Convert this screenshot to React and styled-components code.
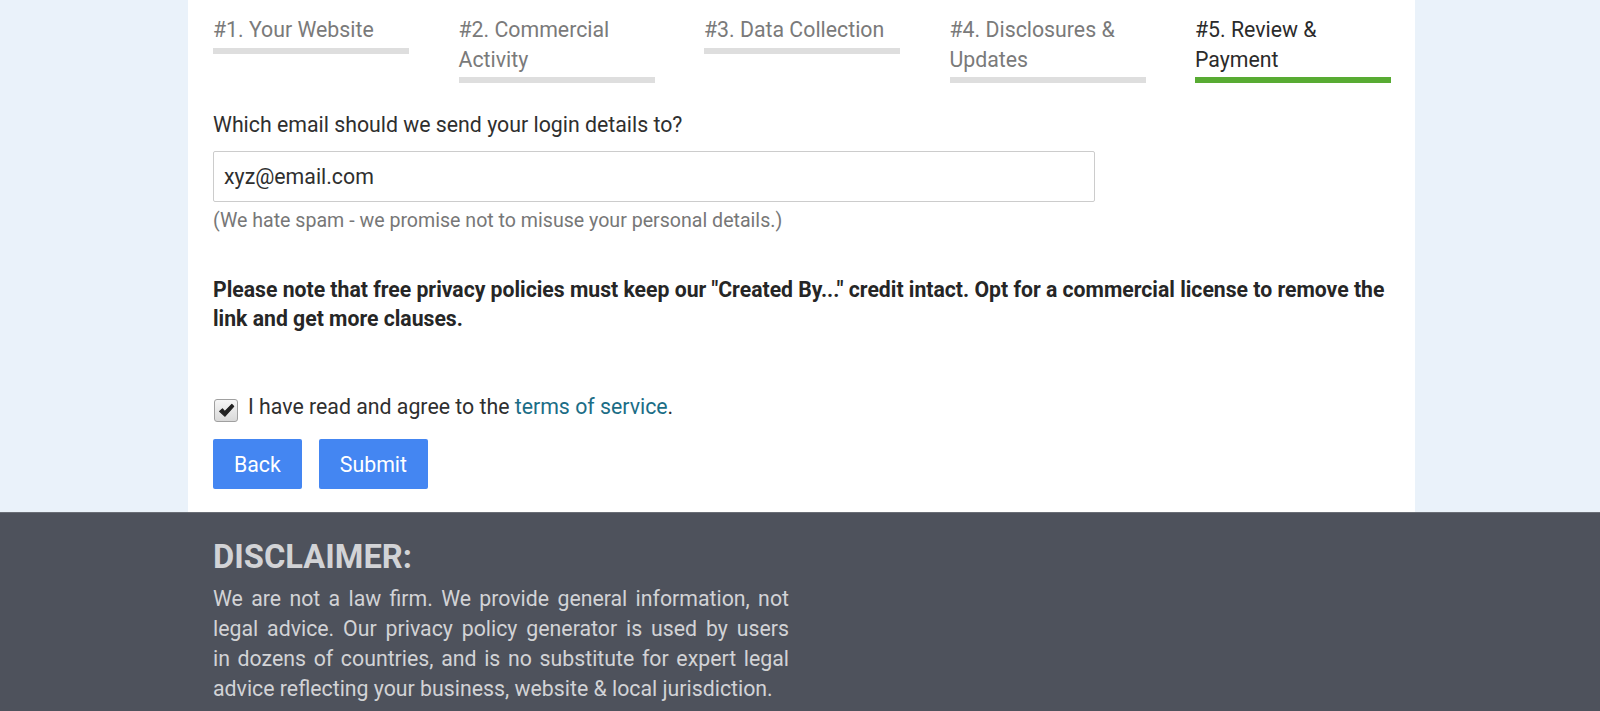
import React from 'react'
import { useState } from 'react'
import styled, { createGlobalStyle } from "styled-components";

const GlobalStyle = createGlobalStyle`
  html, body {
    margin: 0;
    padding: 0;
    background-color: #eaf2fa;
    font-family: Roboto, "Liberation Sans", Arial, sans-serif;
    color: #333;
  }
  * {
    box-sizing: border-box;
  }
`;

const steps = [
  { id: 1, title: "#1. Your Website" },
  { id: 2, title: "#2. Commercial Activity" },
  { id: 3, title: "#3. Data Collection" },
  { id: 4, title: "#4. Disclosures & Updates" },
  { id: 5, title: "#5. Review & Payment" },
];

const App = () => {
  const [email, setEmail] = useState("xyz@email.com");
  const [agreed, setAgreed] = useState(true);
  const current = 5;

  return (
    <>
      <GlobalStyle />
      <Page>
        <Panel>
          <Steps>
            {steps.map((step) => (
              <Step key={step.id} $active={step.id === current}>
                {step.title}
              </Step>
            ))}
          </Steps>

          <Field>
            <Label htmlFor="email">Which email should we send your login details to?</Label>
            <EmailInput
              id="email"
              type="email"
              value={email}
              onChange={(e) => setEmail(e.target.value)}
            />
            <Hint>(We hate spam - we promise not to misuse your personal details.)</Hint>
          </Field>

          <Note>
            Please note that free privacy policies must keep our "Created By..." credit intact.
            Opt for a commercial license to remove the link and get more clauses.
          </Note>

          <Agree>
            <CheckBox
              role="checkbox"
              aria-checked={agreed}
              onClick={() => setAgreed(!agreed)}
            >
              {agreed && (
                <svg width="17" height="15" viewBox="0 0 16 14">
                  <path
                    d="M1.5 7.8 L4.2 5.4 L6.4 8 L13 1.2 L14.8 3.2 L6.6 12.4 Z"
                    fill="#222"
                    stroke="#222"
                    strokeWidth="1"
                    strokeLinejoin="round"
                  />
                </svg>
              )}
            </CheckBox>
            <span>
              I have read and agree to the <Link href="#">terms of service</Link>.
            </span>
          </Agree>

          <Actions>
            <Button type="button">Back</Button>
            <Button type="submit">Submit</Button>
          </Actions>
        </Panel>

        <Footer>
          <FooterInner>
            <Disclaimer>
              <h2>DISCLAIMER:</h2>
              <p>
                We are not a law firm. We provide general information, not legal advice.
                Our privacy policy generator is used by users in&nbsp;dozens of countries, and
                is no substitute for expert legal advice reflecting your business, website
                &amp; local jurisdiction.
              </p>
            </Disclaimer>
          </FooterInner>
        </Footer>
      </Page>
    </>
  );
}

const Page = styled.div`
  display: flex;
  flex-direction: column;
  min-height: 100vh;
`;

const Panel = styled.main`
  width: 1227px;
  margin-left: 188px;
  background-color: #fff;
  padding: 15px 24px 23px 25px;
  display: flex;
  flex-direction: column;
`;

const Steps = styled.div`
  display: grid;
  grid-template-columns: repeat(5, 196px);
  column-gap: 49.5px;
  align-items: start;
`;

const Step = styled.div`
  font-size: 21.3px;
  line-height: 29.5px;
  color: ${(p) => (p.$active ? "#2b2b2b" : "#7a7a7a")};
  padding-bottom: 3px;
  border-bottom: 6px solid ${(p) => (p.$active ? "#58ab33" : "#dedede")};
`;

const Field = styled.div`
  display: flex;
  flex-direction: column;
  margin-top: 27px;
`;

const Label = styled.label`
  font-size: 21.3px;
  line-height: 30px;
  color: #2f2f2f;
`;

const EmailInput = styled.input`
  width: 882px;
  height: 51px;
  margin-top: 11px;
  padding: 0 10px;
  border: 1px solid #cccccc;
  border-radius: 2px;
  font-family: inherit;
  font-size: 21.3px;
  color: #2f2f2f;
  outline: none;
`;

const Hint = styled.div`
  margin-top: 6px;
  font-size: 19.6px;
  line-height: 26px;
  color: #777;
`;

const Note = styled.p`
  margin: 41px 0 0;
  font-size: 21.2px;
  line-height: 29px;
  font-weight: 700;
  color: #262626;
`;

const Agree = styled.label`
  display: flex;
  align-items: center;
  gap: 10px;
  margin-top: 59px;
  font-size: 21.3px;
  line-height: 30px;
  color: #2f2f2f;
`;

const CheckBox = styled.span`
  width: 24px;
  height: 23px;
  margin-top: 6px;
  margin-left: 1px;
  border: 1px solid #a0a0a0;
  border-radius: 3px;
  background: linear-gradient(#f6f6f6, #d9d9d9);
  display: flex;
  align-items: center;
  justify-content: center;
  cursor: pointer;
`;

const Link = styled.a`
  color: #1b6d86;
  text-decoration: none;
`;

const Actions = styled.div`
  display: flex;
  gap: 17px;
  margin-top: 17px;
`;

const Button = styled.button`
  height: 50px;
  padding: 0 21px;
  border: none;
  border-radius: 2px;
  background-color: #4486f2;
  color: #fff;
  font-family: inherit;
  font-size: 21.3px;
  cursor: pointer;
`;

const Footer = styled.footer`
  flex: 1;
  background-color: #4e525c;
  border-top: 1px solid #6a6e76;
`;

const FooterInner = styled.div`
  width: 1227px;
  margin-left: 188px;
  padding: 26px 25px 30px;
`;

const Disclaimer = styled.div`
  width: 576px;

  h2 {
    margin: 0;
    font-size: 32.7px;
    line-height: 36px;
    font-weight: 700;
    color: #d2d3d6;
  }

  p {
    margin: 9px 0 0;
    font-size: 21.3px;
    line-height: 30px;
    text-align: justify;
    color: #d2d3d6;
  }
`;

export default App
